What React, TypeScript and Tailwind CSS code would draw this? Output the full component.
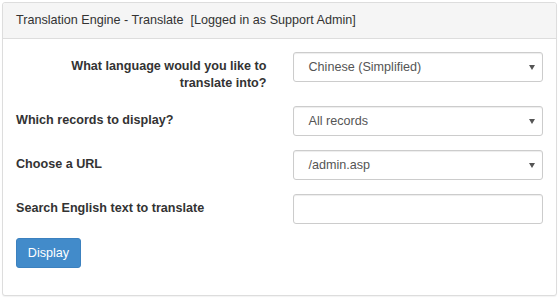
import React from 'react';

const Caret = () => (
  <svg width="6" height="5" viewBox="0 0 6 5" className="absolute right-[7px] top-[12px]">
    <path d="M0 0 H6 L3 5 Z" fill="#555" />
  </svg>
);

const SelectBox: React.FC<{ value: string }> = ({ value }) => (
  <div className="relative h-[30px] w-[250px] rounded-[3px] border border-[#ccc] bg-white pl-[15px] leading-[28px] text-[#555] shadow-[inset_0_1px_1px_rgba(0,0,0,0.075)]">
    {value}
    <Caret />
  </div>
);

export default function App() {
  return (
    <div className="h-[298px] w-[559px] bg-white p-[2px] text-[12.6px] leading-[17px] text-[#333]" style={{ fontFamily: '"Liberation Sans", Arial, sans-serif' }}>
      <div className="h-[294px] w-[555px] rounded-[3px] border border-[#ddd] bg-white shadow-[0_1px_1px_rgba(0,0,0,0.05)]">
        <header className="h-[36px] rounded-t-[3px] border-b border-[#ddd] bg-[#f5f5f5] px-[13px] pt-[9px]">
          Translation Engine - Translate&nbsp; [Logged in as Support Admin]
        </header>
        <main className="px-[13px] pt-[13px]">
          <div className="grid grid-cols-2 gap-x-[26px]">
            <label className="mb-[14px] pt-[6px] text-right font-bold">What language would you like to translate into?</label>
            <div className="mb-[14px]"><SelectBox value="Chinese (Simplified)" /></div>

            <label className="mb-[14px] pt-[6px] font-bold">Which records to display?</label>
            <div className="mb-[14px]"><SelectBox value="All records" /></div>

            <label className="mb-[14px] pt-[6px] font-bold">Choose a URL</label>
            <div className="mb-[14px]"><SelectBox value="/admin.asp" /></div>

            <label className="mb-[14px] pt-[6px] font-bold">Search English text to translate</label>
            <div className="mb-[14px]">
              <input className="h-[30px] w-[250px] rounded-[3px] border border-[#ccc] bg-white px-[10px] shadow-[inset_0_1px_1px_rgba(0,0,0,0.075)] outline-none" />
            </div>
          </div>
          <button className="h-[30px] w-[65px] rounded-[3px] border border-[#3c81bf] bg-[#428bca] text-[12.6px] text-white">Display</button>
        </main>
      </div>
    </div>
  );
}
